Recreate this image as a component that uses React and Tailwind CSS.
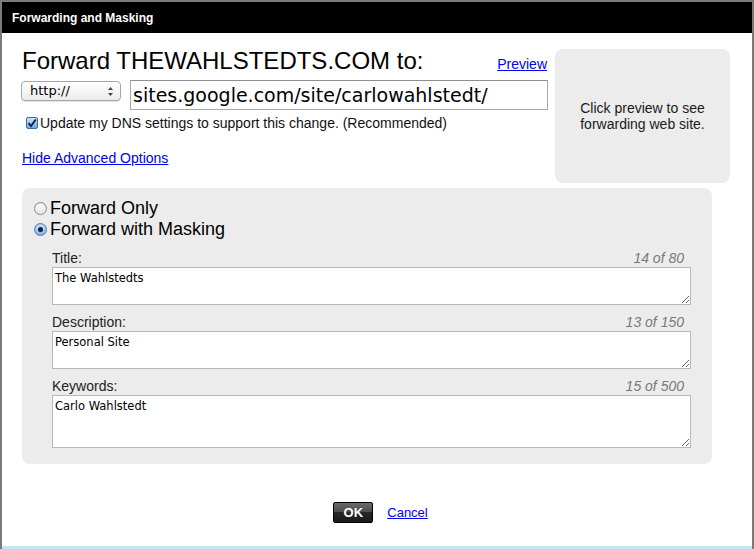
import React from 'react';

const sans = "font-['Liberation_Sans',Arial,sans-serif]";
const lucida = "font-['DejaVu_Sans',sans-serif]";

const Radio = ({ checked }) => (
  <span
    className={`flex h-[13px] w-[13px] items-center justify-center rounded-full border ${
      checked
        ? 'border-[#4a7bb5] bg-[linear-gradient(#d6e8fa,#7fb2e6)]'
        : 'border-[#8a8a8a] bg-[linear-gradient(#ffffff,#e4e4e4)]'
    } shadow-[inset_0_1px_1px_rgba(0,0,0,0.15)]`}
  >
    {checked && <span className="h-[5px] w-[5px] rounded-full bg-[#15223a]" />}
  </span>
);

const Field = ({ label, count, value, tall }) => (
  <div className="mb-[10px] last:mb-0">
    <div className="flex h-[16px] items-end justify-between pb-px text-[14px] leading-[15px]">
      <span className="text-[#222]">{label}</span>
      <span className="pr-[7px] italic text-[#7a7a7a]">{count}</span>
    </div>
    <textarea
      defaultValue={value}
      className={`block w-full ${tall ? 'h-[53px]' : 'h-[38px]'} border border-[#b9b9b9] bg-white px-[2px] py-[3px] text-[11.5px] leading-[14px] text-black outline-none ${lucida}`}
    />
  </div>
);

export default function App() {
  return (
    <div className={`flex h-[549px] w-[754px] flex-col bg-[#7b7b7b] pl-[2px] pr-[2px] pt-[2px] ${sans}`}>
      <div className="flex h-[31px] shrink-0 items-center bg-black pl-[10px] text-[12px] font-bold text-white">
        Forwarding and Masking
      </div>

      <div className="flex flex-1 flex-col bg-white pl-[19px] pt-[14px]">
        <div className="flex">
          <div className="w-[527px]">
            <div className="flex items-baseline justify-between pl-px">
              <h1 className="text-[24px] leading-[28px] text-black">Forward THEWAHLSTEDTS.COM to:</h1>
              <a href="#" className="pr-px text-[14px] text-[#0000ee] underline">Preview</a>
            </div>

            <div className="mt-[5px] flex items-start">
              <div className="mt-px flex h-[20px] w-[100px] items-center justify-between rounded-[4px] border border-[#a6a6a6] bg-[linear-gradient(#ffffff,#ececec)] pl-[8px] pr-[6px] text-[13px] text-black shadow-[0_1px_1px_rgba(0,0,0,0.12)]">
                <span className={lucida}>http://</span>
                <svg width="7" height="11" viewBox="0 0 7 11">
                  <path d="M3.5 1 L6 4 L1 4 Z" fill="#444" />
                  <path d="M3.5 10 L6 7 L1 7 Z" fill="#444" />
                </svg>
              </div>
              <div className={`ml-[9px] flex h-[30px] w-[418px] items-center border border-[#a9a9a9] border-t-[#8f8f8f] bg-white pl-[2px] text-[19px] text-black ${lucida}`}>
                sites.google.com/site/carlowahlstedt/
              </div>
            </div>

            <label className="mt-[5px] flex h-[16px] items-center text-[14px] text-[#111]">
              <span className="ml-[5px] mr-[2px] flex h-[12px] w-[12px] items-center justify-center rounded-[2px] border border-[#3a6ea5] bg-[linear-gradient(#cfe3f7,#6fa6dc)]">
                <svg width="10" height="10" viewBox="0 0 10 10">
                  <path d="M1.5 5.2 L4 8 L8.8 1.5" fill="none" stroke="#0d1b33" strokeWidth="1.8" />
                </svg>
              </span>
              Update my DNS settings to support this change. (Recommended)
            </label>

            <a href="#" className="ml-px mt-[19px] inline-block text-[14px] leading-[17px] text-[#0000ee] underline">
              Hide Advanced Options
            </a>
          </div>

          <div className="ml-[7px] mt-[2px] flex h-[134px] w-[175px] items-center justify-center rounded-[8px] bg-[#ececec] text-center text-[14px] leading-[16px] text-[#1a1a1a]">
            Click preview to see<br />forwarding web site.
          </div>
        </div>

        <div className="ml-px mt-[5px] w-[690px] rounded-[8px] bg-[#ececec] pb-[16px] pl-[12px] pt-[10px]">
          <div className="flex h-[21px] items-center gap-[3px] text-[18px] text-black">
            <Radio />
            <span>Forward Only</span>
          </div>
          <div className="flex h-[21px] items-center gap-[3px] text-[18px] text-black">
            <Radio checked />
            <span>Forward with Masking</span>
          </div>

          <div className="ml-[18px] mt-[11px] w-[639px]">
            <Field label="Title:" count="14 of 80" value="The Wahlstedts" />
            <Field label="Description:" count="13 of 150" value="Personal Site" />
            <Field label="Keywords:" count="15 of 500" value="Carlo Wahlstedt" tall />
          </div>
        </div>

        <div className="mt-[38px] flex items-center justify-center gap-[14px] pr-[12px]">
          <button className="flex h-[21px] w-[40px] items-center justify-center rounded-[2px] border border-black bg-[linear-gradient(#6a6a6a,#4a4a4a_50%,#262626_50%,#1a1a1a)] text-[13px] font-bold text-white">
            OK
          </button>
          <a href="#" className="text-[13px] text-[#0000ee] underline">Cancel</a>
        </div>
      </div>

      <div className="h-[3px] shrink-0 bg-[#bfe6f2]" />
    </div>
  );
}
